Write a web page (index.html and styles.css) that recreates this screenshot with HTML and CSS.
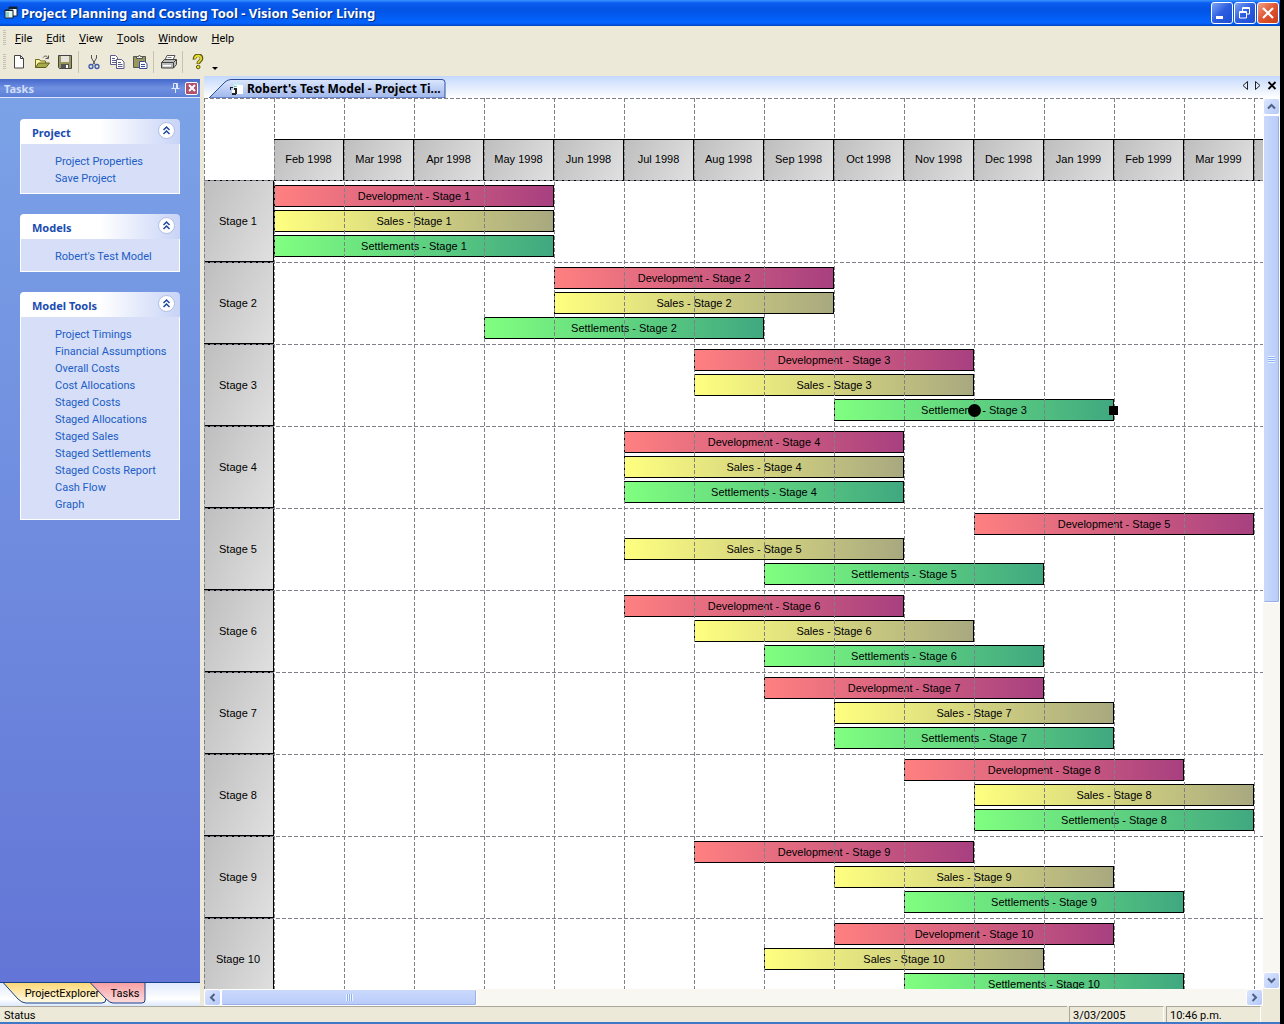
FILE: index.html
```html
<!DOCTYPE html>
<html lang="en">
<head>
  <meta charset="UTF-8">
  <title>Project Planning and Costing Tool</title>
  <link rel="stylesheet" href="styles.css">
</head>
<body>
  <div class="app">
    <header class="titlebar">
      <svg class="app-icon" width="14" height="14" viewBox="0 0 14 14"><path d="M5 1h8v9H5z" fill="#fff" stroke="#123"/><path d="M5 1h8v2H5z" fill="#123"/><path d="M1 4h8v8H1z" fill="#e8f4f0" stroke="#123"/><path d="M1 4h8v1H1z" fill="#123"/><path d="M2 6h3v5H2z" fill="#8cd0cc"/></svg>
      <h1>Project Planning and Costing Tool - Vision Senior Living</h1>
      <div class="window-buttons">
        <button class="win" aria-label="Minimize"><svg width="20" height="20" viewBox="0 0 20 20"><path d="M4 13h7v3H4z" fill="#fff"/></svg></button>
        <button class="win" aria-label="Restore"><svg width="20" height="20" viewBox="0 0 20 20" fill="none" stroke="#fff"><path d="M7.500 8V4.500h7V11H12M7.500 5.500h7M4.500 8.500h7v6.500h-7zM4.500 9.500h7"/></svg></button>
        <button class="win win-close" aria-label="Close"><svg width="20" height="20" viewBox="0 0 20 20"><path d="M5 5l10 10M15 5L5 15" stroke="#fff" stroke-width="2.200"/></svg></button>
      </div>
    </header>

    <nav class="menubar">
      <span class="grip"></span>
      <button><u>F</u>ile</button>
      <button><u>E</u>dit</button>
      <button><u>V</u>iew</button>
      <button><u>T</u>ools</button>
      <button><u>W</u>indow</button>
      <button><u>H</u>elp</button>
    </nav>

    <div class="toolbar">
      <span class="grip"></span>
      <button aria-label="New"><svg width="16" height="16" viewBox="0 0 16 16"><path d="M3.500 1.500h6l3 3v9.500h-9z" fill="#fff" stroke="#444"/><path d="M9.500 1.500v3h3" fill="none" stroke="#444"/></svg></button>
      <button aria-label="Open"><svg width="16" height="16" viewBox="0 0 16 16"><path d="M1.500 13.500v-8h4l1 1.500h5v2" fill="#fff6a0" stroke="#6b6b20"/><path d="M1.500 13.500l3-4.500h11l-3.500 4.500z" fill="#a8a84c" stroke="#5f5f1c"/><path d="M9 3.500c1.500-2 4-2 5 .5M14.500 1.500v3h-3" fill="none" stroke="#555"/></svg></button>
      <button aria-label="Save"><svg width="16" height="16" viewBox="0 0 16 16"><path d="M1.500 1.500h13v13h-12l-1-1z" fill="#98985c" stroke="#444"/><path d="M4 2h8v6H4z" fill="#e4e4dc"/><path d="M4 10h8v4.500H4z" fill="#555"/><path d="M9 11h2v3H9z" fill="#fff"/></svg></button>
      <span class="sep"></span>
      <button aria-label="Cut"><svg width="16" height="16" viewBox="0 0 16 16" fill="none"><path d="M5.500 1v3l4 7M10.500 1v3l-4 7" stroke="#555"/><circle cx="5" cy="12.500" r="2" stroke="#4058a8" stroke-width="1.300"/><circle cx="11" cy="12.500" r="2" stroke="#4058a8" stroke-width="1.300"/></svg></button>
      <button aria-label="Copy"><svg width="16" height="16" viewBox="0 0 16 16" fill="#fff" stroke="#5c5c88"><path d="M1.500 1.500h5l2 2v7h-7z"/><path d="M3 4.500h3M3 6.500h4M3 8.500h4"/><path d="M7.500 5.500h5l2.500 2.500v6.500H7.500z"/><path d="M9 8.500h3M9 10.500h4.500M9 12.500h4.500"/></svg></button>
      <button aria-label="Paste"><svg width="16" height="16" viewBox="0 0 16 16"><path d="M1.500 2.500h12v11h-12z" fill="#98985c" stroke="#555"/><path d="M4.500 4.500v-2h2l1-1.500 1 1.500h2v2z" fill="#eee" stroke="#555"/><path d="M7.500 7.500h5l2.500 2v5H7.500z" fill="#fff" stroke="#3c4c9c"/><path d="M9 10.500h4M9 12.500h4" stroke="#3c4c9c"/></svg></button>
      <span class="sep"></span>
      <button aria-label="Print"><svg width="18" height="16" viewBox="0 0 18 16"><path d="M5 6l2-4.500h8L13 6" fill="#fff" stroke="#555"/><path d="M1.500 8.500l3-3h12v5l-3 3.500h-12z" fill="#bbb" stroke="#444"/><path d="M1.500 8.500h12v5.500M13.500 8.500l3-3" fill="none" stroke="#444"/><path d="M3 11h8v1.500H3z" fill="#fff"/><path d="M7.500 3.500h4" stroke="#888"/></svg></button>
      <span class="sep"></span>
      <button aria-label="Help"><svg width="16" height="16" viewBox="0 0 16 16" fill="none"><path d="M4.500 5.500C4 0 12 0 11.500 4.500c0 2.500-3.200 2.500-3.200 5.500" stroke="#5a5a10" stroke-width="3.600"/><path d="M4.800 4.800C5 .8 11.500.8 11.200 4.500c0 2.200-3 2.500-3 5" stroke="#e8dc30" stroke-width="1.800"/><circle cx="8.200" cy="13" r="1.800" fill="#e8dc30" stroke="#5a5a10"/></svg></button>
      <span class="more"></span>
    </div>

    <div class="workspace">
      <aside class="sidebar">
        <div class="panel-title">
          <h2>Tasks</h2>
          <button class="pin" aria-label="Pin"><svg width="10" height="12" viewBox="0 0 10 12" fill="none" stroke="#dfe8fb"><path d="M3.500 1.500h4v5h-4zM6.500 1.500v5M1.500 6.500h8M5.500 7v4"/></svg></button>
          <button class="panel-close" aria-label="Close panel"><svg width="10" height="10" viewBox="0 0 10 10"><path d="M2 2l6 6M8 2L2 8" stroke="#fff" stroke-width="2"/></svg></button>
        </div>
        <div class="tasks">
          <section class="card">
            <div class="card-head"><h3>Project</h3><button class="collapse" aria-label="Collapse Project"><svg width="15" height="15" viewBox="0 0 15 15"><path d="M4.500 7l3-3 3 3M4.500 11l3-3 3 3" fill="none" stroke="#20489c" stroke-width="1.500"/></svg></button></div>
            <ul>
              <li><a href="#">Project Properties</a></li>
              <li><a href="#">Save Project</a></li>
            </ul>
          </section>
          <section class="card">
            <div class="card-head"><h3>Models</h3><button class="collapse" aria-label="Collapse Models"><svg width="15" height="15" viewBox="0 0 15 15"><path d="M4.500 7l3-3 3 3M4.500 11l3-3 3 3" fill="none" stroke="#20489c" stroke-width="1.500"/></svg></button></div>
            <ul>
              <li><a href="#">Robert's Test Model</a></li>
            </ul>
          </section>
          <section class="card">
            <div class="card-head"><h3>Model Tools</h3><button class="collapse" aria-label="Collapse Model Tools"><svg width="15" height="15" viewBox="0 0 15 15"><path d="M4.500 7l3-3 3 3M4.500 11l3-3 3 3" fill="none" stroke="#20489c" stroke-width="1.500"/></svg></button></div>
            <ul>
              <li><a href="#">Project Timings</a></li>
              <li><a href="#">Financial Assumptions</a></li>
              <li><a href="#">Overall Costs</a></li>
              <li><a href="#">Cost Allocations</a></li>
              <li><a href="#">Staged Costs</a></li>
              <li><a href="#">Staged Allocations</a></li>
              <li><a href="#">Staged Sales</a></li>
              <li><a href="#">Staged Settlements</a></li>
              <li><a href="#">Staged Costs Report</a></li>
              <li><a href="#">Cash Flow</a></li>
              <li><a href="#">Graph</a></li>
            </ul>
          </section>
        </div>
        <div class="side-tabs">
          <button class="side-tab explorer">
            <svg width="104" height="22" viewBox="0 0 104 22"><defs><linearGradient id="amber" x2="0" y2="1"><stop offset="0" stop-color="#fdd878"/><stop offset="1" stop-color="#fffbe8"/></linearGradient></defs><path d="M.5 0L15 16q4 4 8 4h76q4 0 4-4V0z" fill="url(#amber)"/><path d="M.5 0L15 16q4 4 8 4h76q4 0 4-4" fill="none" stroke="#16408c"/></svg>
            <span>ProjectExplorer</span>
          </button>
          <button class="side-tab current">
            <svg width="56" height="22" viewBox="0 0 56 22"><defs><linearGradient id="rose" x2="0" y2="1"><stop offset="0" stop-color="#f8a0a4"/><stop offset="1" stop-color="#fcdcdc"/></linearGradient></defs><path d="M.5 0L16 16q4 4 7 4h29q3 0 3-3V0z" fill="url(#rose)"/><path d="M.5 0L16 16q4 4 7 4h29q3 0 3-3V0" fill="none" stroke="#16408c"/></svg>
            <span>Tasks</span>
          </button>
        </div>
      </aside>

      <main class="document">
        <div class="doc-tabs">
          <button class="doc-tab">
            <svg class="doc-shape" width="238" height="19" viewBox="0 0 238 19"><defs><linearGradient id="tabfill" x2="0" y2="1"><stop offset="0" stop-color="#dce7fd"/><stop offset="1" stop-color="#9fb6ec"/></linearGradient></defs><path d="M1 19L17 3q3-2.500 6-2.500h211q3 0 3 3V19z" fill="url(#tabfill)" stroke="#2c50a0"/></svg>
            <svg class="doc-icon" width="14" height="14" viewBox="0 0 14 14"><path d="M3 1h8v8H3z" fill="#c4ecee"/><path d="M5 3h8v9H5z" fill="#fff"/><path d="M4 4h3v1H4z" fill="#7bb"/><path d="M0 5h3v1H1v2H0zM4 6h3v6H5V8H4zM2 11h4v2H2z" fill="#222"/><path d="M2 8h3v3H2z" fill="#fff"/></svg>
            <span>Robert's Test Model - Project Ti...</span>
          </button>
          <div class="doc-nav">
            <button aria-label="Previous tab"><svg width="8" height="10" viewBox="0 0 8 10"><path d="M6.500 1.500v8l-4.500-4z" fill="none" stroke="#222"/></svg></button>
            <button aria-label="Next tab"><svg width="8" height="10" viewBox="0 0 8 10"><path d="M1.500 1.500v8l4.500-4z" fill="none" stroke="#222"/></svg></button>
            <button aria-label="Close tab"><svg width="10" height="10" viewBox="0 0 10 10"><path d="M1.500 2l7 7M8.500 2l-7 7" stroke="#000" stroke-width="1.800"/></svg></button>
          </div>
        </div>

        <div class="chart-frame">
          <div class="chart">
            <div class="months">
              <div>Feb 1998</div><div>Mar 1998</div><div>Apr 1998</div><div>May 1998</div><div>Jun 1998</div><div>Jul 1998</div><div>Aug 1998</div><div>Sep 1998</div><div>Oct 1998</div><div>Nov 1998</div><div>Dec 1998</div><div>Jan 1999</div><div>Feb 1999</div><div>Mar 1999</div><div></div>
            </div>
            <!-- start = month number, counted from Feb 1998; every task runs four months -->
            <div class="stage">
              <div class="stage-name">Stage 1</div>
              <div class="bars">
                <div class="bar dev" style="--start: 1">Development - Stage 1</div>
                <div class="bar sales" style="--start: 1">Sales - Stage 1</div>
                <div class="bar settle" style="--start: 1">Settlements - Stage 1</div>
              </div>
            </div>
            <div class="stage">
              <div class="stage-name">Stage 2</div>
              <div class="bars">
                <div class="bar dev" style="--start: 5">Development - Stage 2</div>
                <div class="bar sales" style="--start: 5">Sales - Stage 2</div>
                <div class="bar settle" style="--start: 4">Settlements - Stage 2</div>
              </div>
            </div>
            <div class="stage">
              <div class="stage-name">Stage 3</div>
              <div class="bars">
                <div class="bar dev" style="--start: 7">Development - Stage 3</div>
                <div class="bar sales" style="--start: 7">Sales - Stage 3</div>
                <div class="bar settle selected" style="--start: 9">Settlements - Stage 3</div>
              </div>
            </div>
            <div class="stage">
              <div class="stage-name">Stage 4</div>
              <div class="bars">
                <div class="bar dev" style="--start: 6">Development - Stage 4</div>
                <div class="bar sales" style="--start: 6">Sales - Stage 4</div>
                <div class="bar settle" style="--start: 6">Settlements - Stage 4</div>
              </div>
            </div>
            <div class="stage">
              <div class="stage-name">Stage 5</div>
              <div class="bars">
                <div class="bar dev" style="--start: 11">Development - Stage 5</div>
                <div class="bar sales" style="--start: 6">Sales - Stage 5</div>
                <div class="bar settle" style="--start: 8">Settlements - Stage 5</div>
              </div>
            </div>
            <div class="stage">
              <div class="stage-name">Stage 6</div>
              <div class="bars">
                <div class="bar dev" style="--start: 6">Development - Stage 6</div>
                <div class="bar sales" style="--start: 7">Sales - Stage 6</div>
                <div class="bar settle" style="--start: 8">Settlements - Stage 6</div>
              </div>
            </div>
            <div class="stage">
              <div class="stage-name">Stage 7</div>
              <div class="bars">
                <div class="bar dev" style="--start: 8">Development - Stage 7</div>
                <div class="bar sales" style="--start: 9">Sales - Stage 7</div>
                <div class="bar settle" style="--start: 9">Settlements - Stage 7</div>
              </div>
            </div>
            <div class="stage">
              <div class="stage-name">Stage 8</div>
              <div class="bars">
                <div class="bar dev" style="--start: 10">Development - Stage 8</div>
                <div class="bar sales" style="--start: 11">Sales - Stage 8</div>
                <div class="bar settle" style="--start: 11">Settlements - Stage 8</div>
              </div>
            </div>
            <div class="stage">
              <div class="stage-name">Stage 9</div>
              <div class="bars">
                <div class="bar dev" style="--start: 7">Development - Stage 9</div>
                <div class="bar sales" style="--start: 9">Sales - Stage 9</div>
                <div class="bar settle" style="--start: 10">Settlements - Stage 9</div>
              </div>
            </div>
            <div class="stage">
              <div class="stage-name">Stage 10</div>
              <div class="bars">
                <div class="bar dev" style="--start: 9">Development - Stage 10</div>
                <div class="bar sales" style="--start: 8">Sales - Stage 10</div>
                <div class="bar settle" style="--start: 10">Settlements - Stage 10</div>
              </div>
            </div>
          </div>

          <div class="scroll vertical">
            <button aria-label="Scroll up"><svg width="9" height="9" viewBox="0 0 9 9"><path d="M1 6.500l3.500-3.500L8 6.500" fill="none" stroke="#4d6185" stroke-width="2"/></svg></button>
            <div class="track"><div class="thumb"><span></span></div></div>
            <button aria-label="Scroll down"><svg width="9" height="9" viewBox="0 0 9 9"><path d="M1 2.500L4.500 6 8 2.500" fill="none" stroke="#4d6185" stroke-width="2"/></svg></button>
          </div>
          <div class="scroll horizontal">
            <button aria-label="Scroll left"><svg width="9" height="9" viewBox="0 0 9 9"><path d="M6.500 1L3 4.500 6.500 8" fill="none" stroke="#4d6185" stroke-width="2"/></svg></button>
            <div class="track"><div class="thumb"><span></span></div></div>
            <button aria-label="Scroll right"><svg width="9" height="9" viewBox="0 0 9 9"><path d="M2.500 1L6 4.500 2.500 8" fill="none" stroke="#4d6185" stroke-width="2"/></svg></button>
          </div>
        </div>
      </main>
    </div>

    <footer class="statusbar">
      <div class="status-text">Status</div>
      <div class="status-cell">3/03/2005</div>
      <div class="status-cell">10:46 p.m.</div>
    </footer>
  </div>
</body>
</html>
```

FILE: styles.css
```css
* {
  box-sizing: border-box;
}
body {
  margin: 0;
  background: #000;
  font-family: Roboto, "Noto Sans", sans-serif;
  font-size: 11px;
  color: #000;
}
h1, h2, h3, ul {
  margin: 0;
  padding: 0;
}
button {
  display: flex;
  align-items: center;
  justify-content: center;
  margin: 0;
  padding: 0;
  border: 0;
  background: none;
  font: inherit;
  color: inherit;
}
svg {
  display: block;
}
.app {
  display: flex;
  flex-direction: column;
  height: 100vh;
  margin-right: 4px;
  background: #ece9d8;
  border-bottom: 2px solid #4078c8;
}

/* title bar */
.titlebar {
  flex: none;
  display: flex;
  align-items: center;
  height: 26px;
  padding: 0 1px 0 4px;
  background: linear-gradient(#3a94ff 0, #0a5cf0 3px, #0353e4 10px, #0262fa 20px, #0464ff 23px, #0242c0 26px);
}
.titlebar h1 {
  flex: 1;
  margin-left: 3px;
  font-family: "Noto Sans", sans-serif;
  font-size: 13px;
  line-height: 20px;
  color: #fff;
  text-shadow: 1px 1px 1px #0a2c80;
}
.window-buttons {
  display: flex;
  gap: 1px;
}
.win {
  width: 22px;
  height: 22px;
  border: 1px solid #fff;
  border-radius: 3px;
  background: linear-gradient(135deg, #7ca4f4, #2c5ce0 50%, #1c4cd0);
}
.win-close {
  background: linear-gradient(135deg, #f0a088, #e05430 50%, #c83c18);
}

/* menu and toolbar */
.menubar, .toolbar {
  flex: none;
  display: flex;
  align-items: center;
  padding-left: 3px;
}
.menubar {
  height: 24px;
}
.menubar .grip {
  margin-right: 2px;
}
.menubar button {
  height: 20px;
  padding: 0 7px;
}
.toolbar {
  height: 24px;
  margin-bottom: 2px;
}
.toolbar button {
  width: 23px;
  height: 22px;
}
.grip {
  width: 3px;
  height: 16px;
  margin-right: 1px;
  background: repeating-linear-gradient(#c4c1b0 0 1px, #ece9d8 1px 2px);
}
.sep {
  width: 1px;
  height: 22px;
  margin: 0 3px 0 2px;
  background: #c5c2b0;
}
.more {
  align-self: flex-end;
  margin: 0 0 4px 3px;
  border: 3px solid transparent;
  border-top-color: #000;
  border-bottom: 0;
}

.workspace {
  flex: 1;
  display: flex;
  gap: 4px;
  min-height: 0;
}

/* left panel */
.sidebar {
  flex: none;
  display: flex;
  flex-direction: column;
  width: 200px;
  padding-top: 3px;
}
.panel-title {
  display: flex;
  align-items: center;
  gap: 5px;
  height: 19px;
  padding: 0 2px 0 4px;
  background: linear-gradient(#4468cc, #7090e0 50%, #5c80d8);
  border-bottom: 1px solid #dce6fa;
}
.panel-title h2, .card-head h3 {
  font-family: "Noto Sans", sans-serif;
  font-size: 11px;
}
.panel-title h2 {
  flex: 1;
  color: #d0defa;
}
.panel-close {
  width: 13px;
  height: 13px;
  border: 1px solid #fff;
  border-radius: 2px;
  background: #b0506c;
}
.tasks {
  flex: 1;
  display: flex;
  flex-direction: column;
  gap: 20px;
  padding: 21px 20px;
  background: linear-gradient(#7ba2e7, #6375d6);
}
.card {
  border-radius: 4px 4px 0 0;
  overflow: hidden;
}
.card-head {
  display: flex;
  justify-content: space-between;
  height: 25px;
  padding: 0 5px 0 12px;
  background: linear-gradient(to right, #fff 50%, #c8d4f7);
}
.card-head h3 {
  line-height: 27px;
  color: #1c4cb0;
}
.collapse {
  width: 17px;
  height: 17px;
  margin-top: 3px;
  border: 1px solid #b0bce0;
  border-radius: 50%;
  background: #fff;
}
.card ul {
  list-style: none;
  padding: 9px 0 6px 34px;
  background: #d6dff7;
  border: 1px solid #fff;
  border-top: 0;
}
.card li {
  line-height: 17px;
}
.card a {
  color: #215dc6;
  text-decoration: none;
}
.side-tabs {
  display: flex;
  height: 24px;
  padding-left: 3px;
  border-top: 1px solid #16408c;
  background: linear-gradient(#e0eafc, #fff 70%, #dce8fc);
}
.side-tab {
  position: relative;
  height: 21px;
}
.side-tab svg {
  position: absolute;
  top: 0;
  left: 0;
}
.side-tab span {
  position: relative;
}
.explorer {
  width: 104px;
  padding-left: 14px;
}
.current {
  width: 56px;
  margin-left: -17px;
  padding-left: 14px;
}

/* document area */
.document {
  flex: 1;
  display: flex;
  flex-direction: column;
  min-width: 0;
}
.doc-tabs {
  flex: none;
  display: flex;
  align-items: flex-end;
  justify-content: space-between;
  height: 22px;
  padding: 0 3px 0 4px;
  background: linear-gradient(#c4d8fc, #fff);
}
.doc-tab {
  position: relative;
  justify-content: flex-start;
  width: 238px;
  height: 19px;
  padding-left: 22px;
  font-family: "Noto Sans", sans-serif;
  font-size: 12px;
  font-weight: bold;
}
.doc-shape {
  position: absolute;
  top: 0;
  left: 0;
}
.doc-icon, .doc-tab span {
  position: relative;
}
.doc-tab span {
  margin-left: 3px;
  white-space: nowrap;
}
.doc-nav {
  display: flex;
  gap: 5px;
  margin-bottom: 8px;
}
.chart-frame {
  flex: 1;
  display: grid;
  grid-template: minmax(0, 1fr) 17px / minmax(0, 1fr) 17px;
  min-height: 0;
}

/* timeline chart */
.chart {
  position: relative;
  overflow: hidden;
  padding-top: 41px;
  background: #fff;
  font-family: "Liberation Sans", Arial, sans-serif;
}
/* dashed month and stage lines, drawn over the bars */
.chart::after {
  content: "";
  position: absolute;
  inset: 0;
  pointer-events: none;
  background:
    conic-gradient(from 0deg at 1px 4px, transparent 270deg, #808088 0) 0 0 / 70px 6px,
    conic-gradient(from 0deg at 4px 1px, transparent 270deg, #808088 0) 0 0 / 6px 82px;
}
.months {
  display: grid;
  grid-template-columns: repeat(15, 70px);
  margin-left: 70px;
  height: 42px;
}
.months div, .stage-name {
  display: flex;
  align-items: center;
  justify-content: center;
  border: 1px solid #000;
  background: linear-gradient(115deg, #bebebe, #e0e0e0);
}
.months div {
  padding-bottom: 2px;
  border-left: 0;
}
.stage {
  display: grid;
  grid-template-columns: 70px 1fr;
  height: 82px;
}
.months + .stage {
  margin-top: -1px;
}
.stage-name {
  padding-right: 1px;
  border-left: 0;
}
.bars {
  display: grid;
  grid-template-columns: repeat(15, 70px);
  grid-auto-rows: 22px;
  row-gap: 3px;
  padding-top: 5px;
}
.bar {
  position: relative;
  grid-column: var(--start) / span 4;
  border: 1px solid #000;
  line-height: 20px;
  text-align: center;
}
.dev {
  background: linear-gradient(to right, #ff8080, #a84080);
}
.sales {
  background: linear-gradient(to right, #ffff80, #a8a880);
}
.settle {
  background: linear-gradient(to right, #80ff80, #40a880);
}
/* drag handles of the selected task */
.selected::before, .selected::after {
  content: "";
  position: absolute;
  z-index: 1;
  background: #000;
}
.selected::before {
  top: 4px;
  left: 133px;
  width: 13px;
  height: 13px;
  border-radius: 50%;
}
.selected::after {
  top: 6px;
  right: -5px;
  width: 9px;
  height: 9px;
}

/* scroll bars */
.scroll {
  display: flex;
  background: #f8f7f2;
}
.vertical {
  flex-direction: column;
}
.scroll button {
  flex: none;
  width: 17px;
  height: 17px;
  border: 1px solid #fff;
  border-radius: 3px;
  background: linear-gradient(135deg, #dce6fe, #b4c8f8);
}
.track {
  flex: 1;
}
.thumb {
  display: flex;
  align-items: center;
  justify-content: center;
  border: 1px solid #fff;
  border-radius: 2px;
  background: linear-gradient(to right, #cad8fc, #b8ccfa);
  box-shadow: inset -1px -1px #98b0e4;
}
.vertical .thumb {
  height: 57%;
}
.horizontal .thumb {
  width: 25%;
  height: 17px;
  background: linear-gradient(#cad8fc, #b8ccfa);
}
.vertical .thumb span {
  width: 7px;
  height: 7px;
  background: repeating-linear-gradient(#eef4fe 0 1px, #8cb0f0 1px 2px);
}
.horizontal .thumb span {
  width: 7px;
  height: 7px;
  background: repeating-linear-gradient(to right, #eef4fe 0 1px, #8cb0f0 1px 2px);
}

/* status bar */
.statusbar {
  flex: none;
  display: flex;
  gap: 2px;
  height: 16px;
  padding-right: 19px;
  line-height: 17px;
}
.status-text {
  flex: 1;
  padding-left: 4px;
  border-top: 1px solid #aca899;
}
.status-cell {
  width: 95px;
  padding-left: 3px;
  border: 1px solid #aca899;
  border-right-color: #fff;
  border-bottom: 0;
}
```
